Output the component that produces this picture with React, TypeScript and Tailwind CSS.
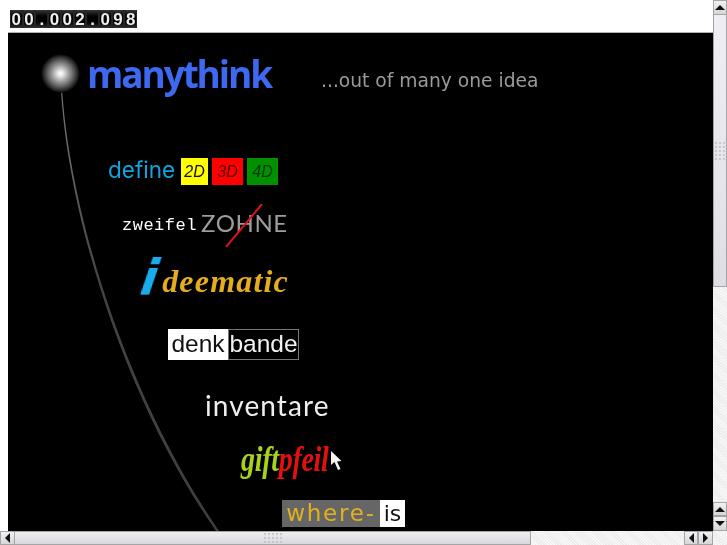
const sans = "font-['Liberation_Sans',sans-serif]";

function Tri({ d }: { d: "u" | "d" | "l" | "r" }) {
  const points = { u: "0,6 10,6 5,1", d: "0,1 10,1 5,6", l: "6,0 6,10 1,5", r: "1,0 1,10 6,5" }[d];
  const vertical = d === "u" || d === "d";
  return (
    <svg width={vertical ? 10 : 7} height={vertical ? 7 : 10}>
      <polygon points={points} fill="#111" />
    </svg>
  );
}

function Btn({ d, className = "" }: { d: "u" | "d" | "l" | "r"; className?: string }) {
  return (
    <div
      className={`flex shrink-0 items-center justify-center border border-[#a5a5a5] bg-gradient-to-b from-[#f2f2f4] to-[#d6d6da] ${className}`}
    >
      <Tri d={d} />
    </div>
  );
}

function Grip({ vertical = false }: { vertical?: boolean }) {
  return (
    <div className={`grid gap-[2px] ${vertical ? "grid-cols-3" : "grid-cols-5"}`}>
      {Array.from({ length: 15 }).map((_, i) => (
        <div key={i} className="h-[2px] w-[2px] bg-[#c6c6cc]" />
      ))}
    </div>
  );
}

const hatch =
  "bg-[#f3f3f3] bg-[repeating-linear-gradient(45deg,#f8f8f8_0px,#f8f8f8_1px,#ececec_1px,#ececec_2px)]";

const digits = ["0", "0", ".", "0", "0", "2", ".", "0", "9", "8"];

export default function App() {
  return (
    <div className={`flex h-[545px] w-[727px] flex-col overflow-hidden bg-white ${sans}`}>
      <div className="flex min-h-0 flex-1">
        <div className="flex min-w-0 flex-1 flex-col">
          <div className="h-[32px] shrink-0 pl-[10px] pt-[10px]">
            <div className="flex h-[18px] w-[127px] bg-black">
              {digits.map((c, i) => (
                <div
                  key={i}
                  className="flex h-full flex-1 items-center justify-center border-x border-[#262626] bg-gradient-to-b from-[#3a3a3a] via-[#000] to-[#333333] text-[17px] font-bold leading-none text-[#eeeeee]"
                >
                  <span className="blur-[0.3px]">{c}</span>
                </div>
              ))}
            </div>
          </div>
          <div className="ml-[8px] min-h-0 flex-1 border-t border-[#b0b0b0]">
            <div className="relative h-full overflow-hidden bg-black pt-[14px]">
              <svg className="absolute left-0 top-0" width="705" height="498">
                <defs>
                  <linearGradient id="c" x1="0" y1="0" x2="0" y2="1">
                    <stop offset="0" stopColor="#7a7a7a" />
                    <stop offset="0.45" stopColor="#444444" />
                    <stop offset="1" stopColor="#3e3e3e" />
                  </linearGradient>
                </defs>
                <path
                  d="M52.5 46 C57 170 112 360 208 498 L211 498 C115 358 59 170 53.5 46 Z"
                  fill="url(#c)"
                />
              </svg>
              <div className="absolute left-[33px] top-[21px] h-[39px] w-[39px] rounded-full bg-[radial-gradient(closest-side,#ffffff_0%,#e8e8e8_14%,#a8a8a8_38%,#626262_66%,#262626_88%,#000000_100%)] blur-[0.7px]" />

              <div className="relative ml-[79px] flex h-[52px] items-center">
                <span className="w-[234px] font-['Open_Sans',sans-serif] text-[37px] font-bold leading-none tracking-[-2.1px] text-[#3d68f0] blur-[0.4px]">
                  manythink
                </span>
                <span className="mt-[16px] font-['DejaVu_Sans',sans-serif] text-[18.7px] leading-none text-[#9a9a9a] blur-[0.3px]">
                  ...out of many one idea
                </span>
              </div>

              <div className="relative ml-[100px] mt-[59px] flex h-[27px] items-center">
                <span className="mb-[3px] w-[73px] font-['Inter',sans-serif] text-[22.5px] leading-none text-[#10a5e0] blur-[0.3px]">
                  define
                </span>
                <div className="flex h-[27px] w-[27px] items-center justify-center bg-[#ffff00] text-[16px] italic text-[#111] blur-[0.3px]">
                  2D
                </div>
                <div className="ml-[4px] flex h-[27px] w-[31px] items-center justify-center bg-[#ff0000] text-[16px] italic text-[#5a0000] blur-[0.3px]">
                  3D
                </div>
                <div className="ml-[4px] flex h-[27px] w-[31px] items-center justify-center bg-[#009000] text-[16px] italic text-[#063806] blur-[0.3px]">
                  4D
                </div>
              </div>

              <div className="relative ml-[114px] mt-[19px] flex h-[43px] items-center">
                <span className="w-[79px] font-['Liberation_Mono',monospace] text-[17px] leading-none tracking-[0.5px] text-white blur-[0.2px]">
                  zweifel
                </span>
                <span className="mb-[6px] font-['Lato',sans-serif] text-[24px] leading-none tracking-[0.6px] text-[#9c9c9c] blur-[0.3px]">
                  ZOHNE
                </span>
                <svg className="absolute left-[100px] top-0" width="45" height="43">
                  <path d="M4 43 C15 30 30 12 40 0" stroke="#d8141c" strokeWidth="2" fill="none" />
                </svg>
              </div>

              <div className="relative ml-[133px] mt-[12px] flex h-[39px] items-end">
                <span className="inline-block -skew-x-[8deg] font-['DejaVu_Sans',sans-serif] text-[50px] font-bold italic leading-[39px] text-[#18aeee] blur-[0.3px]">
                  i
                </span>
                <span className="mb-[1px] ml-[4px] font-['Liberation_Serif',serif] text-[32px] font-bold italic leading-none tracking-[1.2px] text-[#e5ac1d] blur-[0.3px]">
                  deematic
                </span>
              </div>

              <div className="relative ml-[160px] mt-[31px] flex h-[31px] w-[131px] text-[24.5px] leading-none">
                <div className="flex h-full w-[60px] items-center justify-center bg-white text-[#111] blur-[0.2px]">
                  denk
                </div>
                <div className="flex h-full w-[71px] items-center justify-center border border-[#777] bg-black text-[#f2f2f2] blur-[0.2px]">
                  bande
                </div>
              </div>

              <div className="relative ml-[197px] mt-[30px] flex h-[30px] items-center font-['Lato',sans-serif] text-[28px] leading-none tracking-[1.1px] text-[#eeeeee] blur-[0.2px]">
                inventare
              </div>

              <div className="relative ml-[233px] mt-[20px] flex h-[38px] items-center">
                <span className="inline-block origin-center scale-y-[1.3] font-['Liberation_Serif',serif] text-[28px] font-bold italic leading-none tracking-[-0.3px] blur-[0.3px]">
                  <span className="text-[#a8d21c]">gift</span>
                  <span className="text-[#e21010]">pfeil</span>
                </span>
                <svg className="absolute left-[89px] top-[10px]" width="13" height="22">
                  <path d="M1 1 L1 15 L4.5 12 L8 20 L10.5 19 L7 11.5 L11.5 11 Z" fill="#f4f4f4" />
                </svg>
              </div>

              <div className="relative ml-[274px] mt-[22px] flex h-[27px] w-[123px] leading-none">
                <div className="flex h-full w-[98px] items-center justify-center bg-[#666666] font-['DejaVu_Sans',sans-serif] text-[23px] tracking-[1.8px] text-[#e2b21e] blur-[0.2px]">
                  where-
                </div>
                <div className="flex h-full w-[25px] items-center justify-center bg-white font-['DejaVu_Sans',sans-serif] text-[22px] text-[#111] blur-[0.2px]">
                  is
                </div>
              </div>
            </div>
          </div>
        </div>

        <div className="flex w-[14px] shrink-0 flex-col">
          <Btn d="u" className="h-[15px] w-[14px]" />
          <div className="flex h-[272px] w-[14px] shrink-0 flex-col items-center justify-center border-x border-b border-[#a5a5a5] bg-gradient-to-b from-[#eeeff5] to-[#dfdfe3]">
            <Grip vertical />
          </div>
          <div className={`min-h-0 flex-1 ${hatch}`} />
          <Btn d="u" className="h-[14px] w-[14px]" />
          <Btn d="d" className="h-[15px] w-[14px]" />
        </div>
      </div>

      <div className="flex h-[14px] shrink-0">
        <Btn d="l" className="h-[14px] w-[15px]" />
        <div className="flex h-[14px] w-[516px] shrink-0 items-center justify-center border-y border-r border-[#a5a5a5] bg-gradient-to-b from-[#eeeff3] to-[#d9d9dd]">
          <Grip />
        </div>
        <div className={`min-w-0 flex-1 ${hatch}`} />
        <Btn d="l" className="h-[14px] w-[14px]" />
        <Btn d="r" className="h-[14px] w-[15px]" />
        <div className={`h-[14px] w-[14px] shrink-0 ${hatch}`} />
      </div>
    </div>
  );
}
